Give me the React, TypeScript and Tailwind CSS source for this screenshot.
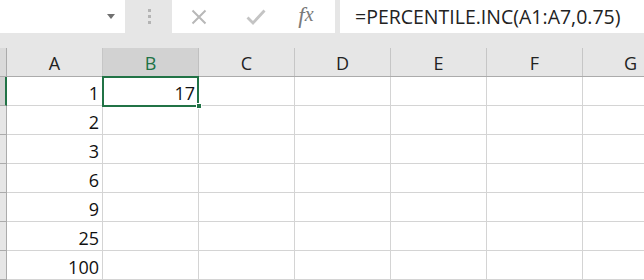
import React from "react";

const cols = ["A", "B", "C", "D", "E", "F", "G"];
const vals = ["1", "2", "3", "6", "9", "25", "100"];

export default function App() {
  const font = { fontFamily: '"Open Sans", "Noto Sans", sans-serif' };
  return (
    <div className="w-[644px] h-[280px] overflow-hidden bg-[#e6e6e6] relative" style={font}>
      {/* top bar */}
      <div className="flex h-[33px]">
        <div className="w-[125px] shrink-0 h-full bg-white flex items-center justify-end pr-[10px]">
          <svg width="8" height="5" viewBox="0 0 8 5"><path d="M0 0H8L4 5Z" fill="#707070" /></svg>
        </div>
        <div className="w-[47px] shrink-0 h-full flex flex-col items-center justify-center gap-[3px] pl-[1px]">
          <div className="w-[3px] h-[3px] bg-[#b4b4b4]" />
          <div className="w-[3px] h-[3px] bg-[#b4b4b4]" />
          <div className="w-[3px] h-[3px] bg-[#b4b4b4]" />
        </div>
        <div className="w-[163px] shrink-0 h-full bg-white flex items-center">
          <div className="w-[54px] flex justify-center">
            <svg width="16" height="16" viewBox="0 0 16 16"><path d="M1.5 1.5L14.5 14.5M14.5 1.5L1.5 14.5" stroke="#b8b8b8" strokeWidth="2" /></svg>
          </div>
          <div className="w-[60px] flex justify-center">
            <svg width="20" height="16" viewBox="0 0 20 16"><path d="M1.5 8.5L7 14L18.5 1.5" stroke="#c4c4c4" strokeWidth="2.8" fill="none" /></svg>
          </div>
          <div className="w-[40px] flex justify-center text-[23px] italic text-[#7a7a7a] leading-none pb-[2px]" style={{ fontFamily: '"Liberation Serif", serif' }}>
            <span>f</span><span className="text-[20px]">x</span>
          </div>
        </div>
        <div className="w-[5px] shrink-0" />
        <div className="flex-1 h-full bg-white flex items-center pl-[15px] text-[19.5px] text-[#222] whitespace-nowrap">
          =PERCENTILE.INC(A1:A7,0.75)
        </div>
      </div>
      {/* gap */}
      <div className="h-[15px]" />
      {/* header row */}
      <div className="flex h-[29px] border-b border-[#ababab]">
        <div className="w-[7px] shrink-0 h-full bg-[#dadada] border-r border-[#ababab]" />
        {cols.map((c) => (
          <div
            key={c}
            className={
              "w-[96px] shrink-0 h-full flex items-end justify-center pb-[2px] text-[18px] leading-none border-r " +
              (c === "B" ? "bg-[#d2d2d2] text-[#217346] border-[#c0c0c0]" : "bg-[#e6e6e6] text-[#222] border-[#c6c6c6]")
            }
          >
            <span className="pb-[2px]">{c}</span>
          </div>
        ))}
      </div>
      {/* rows */}
      <div className="bg-white">
        {vals.map((v, i) => (
          <div key={v} className="flex h-[29px]">
            <div className={"w-[7px] shrink-0 h-full border-b " + (i === 0 ? "bg-[#d2d2d2] border-r-2 border-r-[#217346] border-b-[#ababab]" : "bg-[#e6e6e6] border-r border-r-[#ababab] border-b-[#ababab]")} />
            {cols.map((c) => (
              <div
                key={c}
                className="w-[96px] shrink-0 h-full border-r border-b border-[#d4d4d4] flex items-end justify-end pr-[3px] pb-[1px] text-[18px] leading-[22px] text-[#111] relative"
              >
                {c === "A" ? v : c === "B" && i === 0 ? "17" : ""}
              </div>
            ))}
          </div>
        ))}
      </div>
      {/* selection */}
      <div className="absolute left-[102px] top-[76px] w-[97px] h-[31px] border-2 border-[#217346]" />
      <div className="absolute left-[196px] top-[103px] w-[6px] h-[6px] bg-[#217346] border border-white" />
    </div>
  );
}
